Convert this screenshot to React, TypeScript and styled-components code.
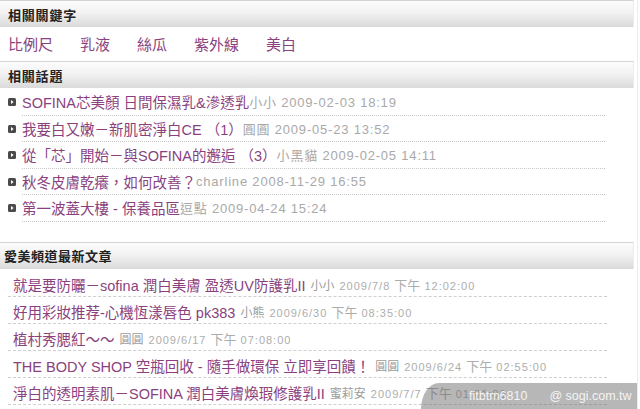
import styled, { createGlobalStyle } from "styled-components";

const GlobalStyle = createGlobalStyle`
body{
    margin:0;
    background:#fff;
    font-family:"Liberation Sans", "Noto Sans CJK TC", sans-serif;
}
`;

const Page = styled.div`
position:relative;
width:637px;
height:409px;
overflow:hidden;
border-right:1px solid #ececec;
`;

const Bar = styled.div<{ $serif?: boolean }>`
height:26px;
display:flex;
align-items:center;
padding-left:${props => props.$serif ? "4px" : "8px"};
margin-right:3px;
border-top:1px solid #d4d4d4;
border-right:1px solid #ececec;
background:linear-gradient(#fcfcfc, #f2f2f2 45%, #dadada);
font-size:13px;
font-weight:bold;
color:#222;
letter-spacing:${props => props.$serif ? "0.5px" : "0.8px"};
`;

const Keywords = styled.div`
height:32px;
display:flex;
align-items:center;
gap:27px;
padding:0 0 2px 8px;
`;

const Keyword = styled.span`
font-size:15px;
color:#8a3f7e;
`;

const Topics = styled.ul`
list-style:none;
margin:0 0 20px;
padding:1px 0 0;
`;

const Topic = styled.li`
display:flex;
height:26.5px;
`;

const Bullet = styled.span`
width:14px;
display:flex;
align-items:center;
padding-left:8px;
svg{ display:block; }
`;

const TopicBody = styled.div`
width:583px;
display:flex;
align-items:center;
border-bottom:1px dotted #c8c8c8;
white-space:nowrap;
`;

const Title = styled.span`
font-size:14.5px;
color:#8a3f7e;
`;

const Info = styled.span`
font-size:13px;
color:#a9a9a9;
letter-spacing:0.8px;
`;

const Articles = styled.ul`
list-style:none;
margin:0;
padding:1px 0 0;
`;

const Article = styled.li`
box-sizing:border-box;
height:27px;
margin-left:8px;
width:599px;
padding:4px 0 0 5px;
display:flex;
align-items:center;
border-bottom:1px dashed #cfcfcf;
white-space:nowrap;
`;

const Author = styled.span`
margin-left:5px;
font-size:12px;
color:#9c9c9c;
`;

const Stamp = styled.span`
margin-left:5px;
font-size:11px;
color:#adadad;
letter-spacing:1px;
`;

const Ampm = styled.span`
font-size:13px;
letter-spacing:0;
`;

const Watermark = styled.div`
position:absolute;
right:0;
bottom:0;
width:216px;
height:26px;
display:flex;
align-items:center;
gap:22px;
padding-left:48px;
box-sizing:border-box;
background:rgba(105, 105, 105, 0.48);
border-top-left-radius:18px 26px;
color:#f4f4f4;
font-size:12.5px;
font-weight:300;
white-space:nowrap;
span{ flex-shrink:0; }
`;

const keywords = ["比例尺", "乳液", "絲瓜", "紫外線", "美白"];

const topics = [
    { title: "SOFINA芯美顏 日間保濕乳&滲透乳", author: "小小", date: "2009-02-03 18:19" },
    { title: "我要白又嫩－新肌密淨白CE （1）", author: " 圓圓", date: "2009-05-23 13:52" },
    { title: "從「芯」開始－與SOFINA的邂逅 （3）", author: "小黑貓", date: "2009-02-05 14:11" },
    { title: "秋冬皮膚乾癢，如何改善？", author: " charline", date: "2008-11-29 16:55" },
    { title: "第一波蓋大樓 - 保養品區", author: "逗點", date: "2009-04-24 15:24" },
];

const articles = [
    { title: "就是要防曬－sofina 潤白美膚 盈透UV防護乳II", author: "小小", day: "2009/7/8", time: "12:02:00" },
    { title: "好用彩妝推荐-心機恆漾唇色 pk383", author: "小熊", day: "2009/6/30", time: "08:35:00" },
    { title: "植村秀腮紅～～", author: "圓圓", day: "2009/6/17", time: "07:08:00" },
    { title: "THE BODY SHOP 空瓶回收 - 隨手做環保 立即享回饋！", author: "圓圓", day: "2009/6/24", time: "02:55:00" },
    { title: "淨白的透明素肌－SOFINA 潤白美膚煥瑕修護乳II", author: "蜜莉安", day: "2009/7/7", time: "01:01:00" },
];

function Arrow() {
    return (
        <svg width="8" height="8" viewBox="0 0 8 8">
            <rect width="8" height="8" rx="1.5" fill="#4a4a4a" />
            <path d="M3 2 L5.6 4 L3 6 Z" fill="#fff" />
        </svg>
    );
}

function App() {
    return (
        <Page>
            <GlobalStyle />
            <Bar>相關關鍵字</Bar>
            <Keywords>
                {keywords.map(k => <Keyword key={k}>{k}</Keyword>)}
            </Keywords>
            <Bar>相關話題</Bar>
            <Topics>
                {topics.map(t => (
                    <Topic key={t.title}>
                        <Bullet><Arrow /></Bullet>
                        <TopicBody>
                            <Title>{t.title}</Title>
                            <Info>{t.author} {t.date}</Info>
                        </TopicBody>
                    </Topic>
                ))}
            </Topics>
            <Bar $serif>愛美頻道最新文章</Bar>
            <Articles>
                {articles.map(a => (
                    <Article key={a.title}>
                        <Title>{a.title}</Title>
                        <Author>{a.author}</Author>
                        <Stamp>{a.day} <Ampm>下午</Ampm> {a.time}</Stamp>
                    </Article>
                ))}
            </Articles>
            <Watermark>
                <span>fitbtm6810</span>
                <span>@ sogi.com.tw</span>
            </Watermark>
        </Page>
    );
}
export default App;
